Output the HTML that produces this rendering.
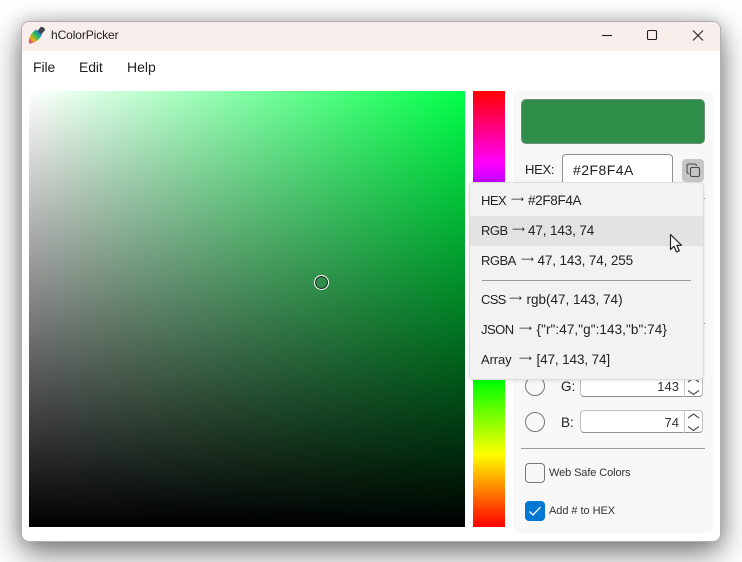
<!DOCTYPE html>
<html><head><meta charset="utf-8">
<style>
html,body{margin:0;padding:0;width:742px;height:562px;overflow:hidden;background:#fff;font-family:"Liberation Sans",sans-serif;color:#222}
.a{position:absolute}
.t{position:absolute;white-space:nowrap;line-height:20px;height:20px}
#win{left:21px;top:21px;width:698px;height:519px;background:#fff;border:1px solid #b0b0b0;border-radius:8px;box-shadow:0 12px 32px rgba(0,0,0,.5),0 0 16px rgba(0,0,0,.2)}
.l,.v,.r{position:absolute;white-space:nowrap;line-height:20px;height:20px;color:#222;margin-top:1px}
.l{font-size:13px;letter-spacing:-.5px}
.v{font-size:13.5px}
.r{font-family:"DejaVu Sans",sans-serif;font-size:9px;color:#222;line-height:20px;margin-top:0;margin-left:1px}
.sep{position:absolute;background:#9b9b9b;height:1px}
.num{position:absolute;left:580px;width:121px;background:#fff;border:1px solid #bdbdbd;border-bottom-color:#8f8f8f;border-radius:4px}
</style></head><body>
<div class="a" id="win"></div>
<div class="a" style="left:22px;top:22px;width:698px;height:29px;background:#f8efed;border-radius:7px 7px 0 0"></div>

<svg class="a" style="left:28px;top:26px" width="18" height="18" viewBox="0 0 18 18">
<defs><linearGradient id="r" x1="0" y1="1" x2="1" y2="0"><stop offset="0" stop-color="#d02090"/><stop offset=".3" stop-color="#e8b020"/><stop offset=".55" stop-color="#30c050"/><stop offset=".8" stop-color="#2080e0"/></linearGradient></defs>
<path d="M1 17.500C0 12 3 7 8 3.500L14 8.500C11.500 14 6 17.500 1 17.500Z" fill="url(#r)"/>
<path d="M9.500 5L12.500 1.200C14.500 0 17.500 2.500 16.800 4.500L13 8.500Z" fill="#3c4450"/>
</svg>
<div class="t" style="left:51px;top:25px;font-size:12px;letter-spacing:-.1px;color:#222">hColorPicker</div>
<svg class="a" style="left:600px;top:28px" width="110" height="14" viewBox="0 0 110 14" fill="none" stroke="#222" stroke-width="1.1">
<path d="M2 7.500H12"/><rect x="47.500" y="2.500" width="9" height="9" rx="1.200"/><path d="M93 2.500L103 12.500M103 2.500L93 12.500"/>
</svg>

<div class="t" style="left:33px;top:57px;font-size:14px;letter-spacing:-.1px">File</div>
<div class="t" style="left:79px;top:57px;font-size:14px;letter-spacing:-.1px">Edit</div>
<div class="t" style="left:127px;top:57px;font-size:14px">Help</div>

<div class="a" style="left:29px;top:91px;width:436px;height:436px;background:linear-gradient(to bottom,rgba(0,0,0,0),#000),linear-gradient(to right,#fff,#00ff48)"></div>
<div class="a" style="left:314px;top:275px;width:13px;height:13px;border:1.500px solid #fff;border-radius:50%;box-shadow:inset 0 0 0 1.100px #1c2a20"></div>
<div class="a" style="left:473px;top:91px;width:32px;height:436px;background:linear-gradient(to bottom,#f00,#f0f 16.67%,#00f 33.33%,#0ff 50%,#0f0 66.67%,#ff0 83.33%,#f00)"></div>

<div class="a" style="left:513px;top:91px;width:200px;height:442px;background:#f8f8f8;border-radius:6px"></div>
<div class="a" style="left:521px;top:99px;width:182px;height:43px;background:#2f8f4a;border:1px solid #6f8f78;border-radius:5px"></div>
<div class="t" style="left:525px;top:160px;font-size:13px;letter-spacing:-.3px">HEX:</div>
<div class="a" style="left:562px;top:154px;width:109px;height:40px;background:#fff;border:1px solid #8f8f8f;border-radius:4px"></div>
<div class="t" style="left:573px;top:160px;font-size:14px;letter-spacing:.45px">#2F8F4A</div>
<div class="a" style="left:682px;top:159px;width:22px;height:23px;background:#c6c6c6;border-radius:4px"></div>
<svg class="a" style="left:685px;top:162px" width="17" height="17" viewBox="0 0 17 17" fill="none" stroke="#4a4a4a" stroke-width="1.100">
<path d="M4 11.500C2.800 11.500 2 10.700 2 9.500V4C2 2.800 2.800 2 4 2H9.500C10.700 2 11.500 2.800 11.500 4"/><rect x="5.500" y="5.500" width="9" height="9" rx="1.500"/>
</svg>

<div class="sep" style="left:521px;top:198px;width:184px"></div>
<div class="sep" style="left:521px;top:323px;width:184px"></div>

<div class="a" style="left:525px;top:376px;width:18px;height:18px;border:1px solid #777;border-radius:50%"></div>
<div class="t" style="left:561px;top:377px;font-size:13.500px">G:</div>
<div class="num" style="top:375px;height:20px"></div>
<div class="t" style="left:640px;top:377px;width:39px;text-align:right;font-size:13px;color:#333">143</div>
<svg class="a" style="left:684px;top:375px" width="18" height="22" viewBox="0 0 18 22" fill="none" stroke="#555" stroke-width="1.300"><path d="M.5 0V22" stroke="#ccc" stroke-width="1"/><path d="M4 7L9.500 3L15 7"/><path d="M4 15.500L9.500 19.500L15 15.500"/></svg>

<div class="a" style="left:469px;top:182px;width:233px;height:196px;background:#f2f2f2;border:1px solid #dcdcdc;border-radius:5px;box-shadow:0 1px 3px rgba(0,0,0,.1)"></div>
<div class="a" style="left:470px;top:216px;width:233px;height:30px;background:#e3e3e3"></div>

<div class="l" style="left:481px;top:190px">HEX</div><div class="r" style="left:510px;top:190px">⟶</div><div class="v" style="left:528px;top:190px;letter-spacing:-.33px">#2F8F4A</div>
<div class="l" style="left:481px;top:220px">RGB</div><div class="r" style="left:511px;top:220px">⟶</div><div class="v" style="left:528px;top:220px;letter-spacing:-.13px">47, 143, 74</div>
<div class="l" style="left:481px;top:250px">RGBA</div><div class="r" style="left:520px;top:250px">⟶</div><div class="v" style="left:537.500px;top:250px;letter-spacing:-.13px">47, 143, 74, 255</div>
<div class="sep" style="left:482px;top:280px;width:209px"></div>
<div class="l" style="left:481px;top:289px;letter-spacing:-.7px">CSS</div><div class="r" style="left:508px;top:289px">⟶</div><div class="v" style="left:526.500px;top:289px">rgb(47, 143, 74)</div>
<div class="l" style="left:481px;top:319px">JSON</div><div class="r" style="left:518px;top:319px">⟶</div><div class="v" style="left:536.500px;top:319px;letter-spacing:.08px">{"r":47,"g":143,"b":74}</div>
<div class="l" style="left:481px;top:349px;letter-spacing:-.1px">Array</div><div class="r" style="left:518px;top:349px">⟶</div><div class="v" style="left:536.500px;top:349px;letter-spacing:-.12px">[47, 143, 74]</div>

<svg class="a" style="left:669px;top:233px" width="15" height="21" viewBox="0 0 15 21">
<path d="M1.500 1.500V16.500L5 13.300L7.500 19L10.300 17.800L7.800 12.300H12.500Z" fill="#fff" stroke="#222" stroke-width="1.200" stroke-linejoin="round"/>
</svg>

<div class="a" style="left:525px;top:412px;width:18px;height:18px;border:1px solid #777;border-radius:50%"></div>
<div class="t" style="left:561px;top:413px;font-size:13.500px">B:</div>
<div class="num" style="top:410px;height:21px"></div>
<div class="t" style="left:640px;top:413px;width:39px;text-align:right;font-size:13px;color:#333">74</div>
<svg class="a" style="left:684px;top:411px" width="18" height="22" viewBox="0 0 18 22" fill="none" stroke="#555" stroke-width="1.300"><path d="M.5 0V22" stroke="#ccc" stroke-width="1"/><path d="M4 7L9.500 3L15 7"/><path d="M4 15.500L9.500 19.500L15 15.500"/></svg>

<div class="sep" style="left:521px;top:448px;width:184px"></div>

<div class="a" style="left:525px;top:463px;width:18px;height:18px;border:1px solid #777;border-radius:4px"></div>
<div class="t" style="left:549px;top:463px;font-size:11px;letter-spacing:-.1px;color:#333">Web Safe Colors</div>
<div class="a" style="left:525px;top:501px;width:20px;height:20px;background:#0078d4;border-radius:4px"></div>
<svg class="a" style="left:525px;top:501px" width="20" height="20" viewBox="0 0 20 20" fill="none" stroke="#fff" stroke-width="1.300"><path d="M4.500 10.500L8 14L15.500 6"/></svg>
<div class="t" style="left:549px;top:501px;font-size:11px;letter-spacing:-.05px;color:#333">Add # to HEX</div>
</body></html>
